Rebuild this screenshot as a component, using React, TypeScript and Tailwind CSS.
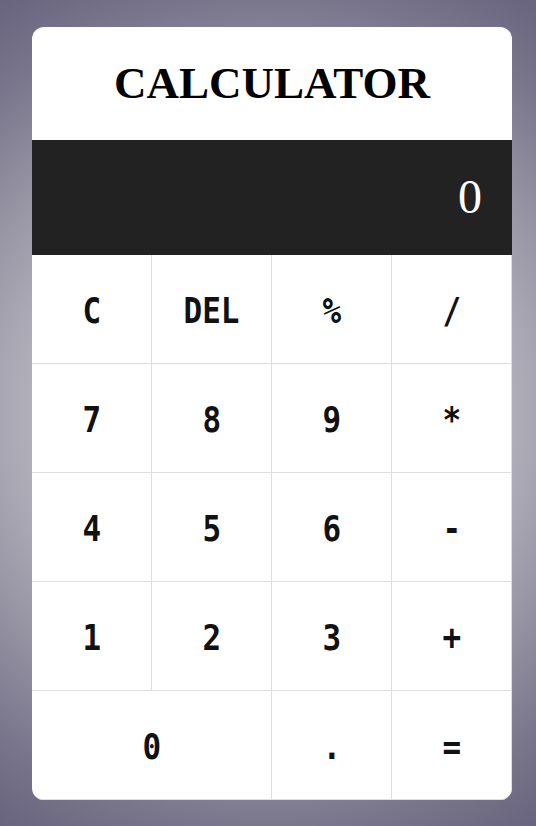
const rows: { label: string; span?: boolean }[][] = [
  [{ label: 'C' }, { label: 'DEL' }, { label: '%' }, { label: '/' }],
  [{ label: '7' }, { label: '8' }, { label: '9' }, { label: '*' }],
  [{ label: '4' }, { label: '5' }, { label: '6' }, { label: '-' }],
  [{ label: '1' }, { label: '2' }, { label: '3' }, { label: '+' }],
  [{ label: '0', span: true }, { label: '.' }, { label: '=' }],
];

export default function App() {
  return (
    <div className="min-h-screen flex items-center justify-center pl-2 bg-[radial-gradient(circle_at_center,#f2f1f5_0%,#a9a7b3_54%,#7a768c_84%,#69647f_100%)]">
      <div className="w-[480px] bg-white rounded-xl overflow-hidden">
        {/* Title */}
        <div className="h-[113px] flex items-center justify-center">
          <h1 className="text-[45px] font-bold text-black font-['Liberation_Serif','Times_New_Roman',serif] leading-none">
            CALCULATOR
          </h1>
        </div>

        {/* Display */}
        <div className="h-[115px] bg-[#222222] flex items-center justify-end pr-[30px]">
          <span className="text-[48px] text-white font-['Liberation_Serif','Times_New_Roman',serif] leading-none">
            0
          </span>
        </div>

        {/* Keys */}
        <div className="grid grid-cols-4 font-['DejaVu_Sans_Mono',monospace]">
          {rows.flat().map((key, i) => (
            <button
              key={i}
              className={`h-[109px] pt-[4px] flex items-center justify-center text-[#111] border-r border-b border-[#dddddd] ${
                key.span ? 'col-span-2' : ''
              }`}
            >
              <span className="inline-block text-[36px] font-bold leading-none scale-x-[0.86]">{key.label}</span>
            </button>
          ))}
        </div>
      </div>
    </div>
  );
}
